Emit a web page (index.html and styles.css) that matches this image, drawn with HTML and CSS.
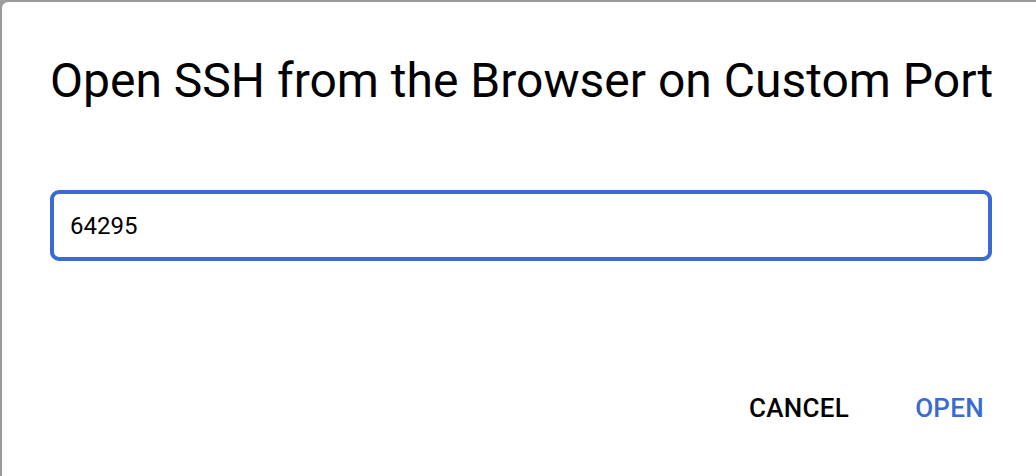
FILE: index.html
```html
<!DOCTYPE html>
<html>
<head>
<meta charset="utf-8">
<link rel="stylesheet" href="styles.css">
</head>
<body>
<div class="dialog">
  <h1 class="title">Open SSH from the Browser on Custom Port</h1>
  <div class="field"><input class="input" type="text" value="64295"></div>
  <div class="actions">
    <button class="btn btn-cancel">CANCEL</button>
    <button class="btn btn-open">OPEN</button>
  </div>
</div>
</body>
</html>
```

FILE: styles.css
```css
html, body {
  margin: 0;
  padding: 0;
  background: #a0a0a0;
  width: 1036px;
  height: 476px;
  overflow: hidden;
}
.dialog {
  box-sizing: border-box;
  width: 1036px;
  height: 476px;
  background: #fff;
  border-top: 2px solid #9a9a9a;
  border-left: 2px solid #9a9a9a;
  border-top-left-radius: 8px;
  padding: 47px 0 0 48px;
  font-family: Roboto, "Noto Sans", sans-serif;
}
.title {
  margin: 0;
  font-size: 48px;
  font-weight: 400;
  color: #000;
  line-height: 64px;
  letter-spacing: 0;
}
.field {
  margin-top: 77px;
  width: 942px;
}
.input {
  box-sizing: border-box;
  width: 100%;
  height: 71px;
  border: 4px solid #3a6bd0;
  border-radius: 9px;
  padding: 0 16px;
  font-family: Roboto, sans-serif;
  font-size: 24px;
  color: #000;
  outline: none;
}
.actions {
  margin-top: 132px;
  width: 942px;
  display: flex;
  justify-content: flex-end;
  gap: 50px;
}
.btn {
  background: none;
  border: none;
  padding: 0 8px;
  font-family: Roboto, sans-serif;
  font-weight: 500;
  font-size: 26px;
  letter-spacing: 0.3px;
}
.btn-cancel { color: #000; }
.btn-open { color: #3a6bd0; }
```
